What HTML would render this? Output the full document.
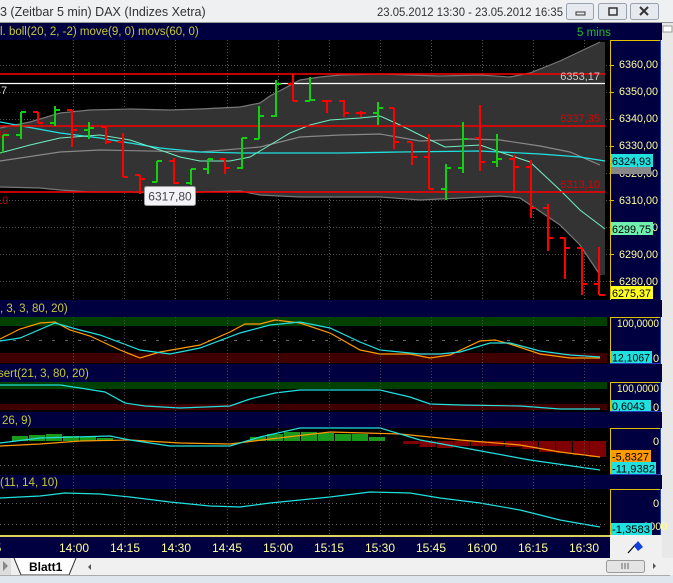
<!DOCTYPE html><html><head><meta charset="utf-8"><style>
body{margin:0;width:673px;height:583px;overflow:hidden;background:#f0f0f0;font-family:"Liberation Sans",sans-serif}
svg{position:absolute;left:0;top:0}
</style></head><body>
<svg width="673" height="583" viewBox="0 0 673 583" font-family="Liberation Sans, sans-serif">
<rect x="0" y="0" width="673" height="23" fill="#eef0f2"/>
<text x="0" y="16" font-size="12.5" fill="#333">3 (Zeitbar 5 min)  DAX (Indizes Xetra)</text>
<text x="377" y="16" font-size="12" fill="#333" textLength="186" lengthAdjust="spacingAndGlyphs">23.05.2012 13:30 - 23.05.2012 16:35</text>
<g fill="#e6e9ee" stroke="#9aa2ad"><rect x="566.5" y="3.5" width="27" height="16" rx="2"/><rect x="598.5" y="3.5" width="28" height="16" rx="2"/><rect x="630.5" y="3.5" width="28" height="16" rx="2"/></g>
<rect x="576" y="12" width="9" height="3" fill="none" stroke="#333"/>
<rect x="609" y="8" width="8" height="7" fill="none" stroke="#333" stroke-width="1.5"/>
<path d="M640 7l8 8M648 7l-8 8" stroke="#333" stroke-width="2"/>
<rect x="0" y="22" width="673" height="1" fill="#999"/>
<rect x="662" y="23" width="11" height="535" fill="#e8e8e8"/>
<rect x="663" y="26" width="9" height="6" fill="#fff" stroke="#999"/>
<rect x="0" y="23" width="662" height="17" fill="#000040"/>
<text x="0" y="35" font-size="11.5" fill="#c8c832">l. boll(20, 2, -2) move(9, 0) movs(60, 0)</text>
<text x="577" y="36" font-size="11.5" fill="#20c020">5 mins</text>
<rect x="0" y="40" width="610" height="260" fill="#000"/>
<g stroke="#555" stroke-dasharray="1 2"><path d="M73.5 40V300M124.5 40V300M175.5 40V300M227.5 40V300M278.5 40V300M329.5 40V300M380.5 40V300M431.5 40V300M482.5 40V300M533.5 40V300M584.5 40V300"/>
<path d="M0 65.5H610M0 92.5H610M0 119.5H610M0 146.5H610M0 173.5H610M0 200.5H610M0 227.5H610M0 254.5H610M0 281.5H610"/></g>
<polygon fill="#333" points="0,128 30,122 60,113 90,110 130,109 170,110 200,109 240,107 260,103 270,96 285,88 300,80 320,77 340,75 380,74 440,76 480,75 510,77 530,73 560,61 600,42 605,42 605,275 600,275 580,245 560,225 535,208 520,198 500,196 460,198 420,200 380,197 330,197 300,197 280,196 260,195 240,191 200,192 160,193 130,192 90,192 60,190 40,188 0,187"/>
<g fill="none" stroke="#777" stroke-width="1.2">
<polyline points="0,128 30,122 60,113 90,110 130,109 170,110 200,109 240,107 260,103 270,96 285,88 300,80 320,77 340,75 380,74 440,76 480,75 510,77 530,73 560,61 600,42"/>
<polyline points="0,187 40,188 60,190 90,192 130,192 160,193 200,192 240,191 260,195 280,196 300,197 330,197 380,197 420,200 460,198 500,196 520,198 535,208 560,225 580,245 600,275"/>
<polyline points="0,161 60,152 100,150 200,152 260,147 300,137 340,135 380,134 420,141 470,139 500,140 540,146 570,152 600,165" stroke="#888"/>
</g>
<polyline fill="none" stroke="#20e0e0" stroke-width="1.3" points="0,122 60,133 100,138 160,148 200,152 240,153 300,153 340,153 400,152 480,151 540,154 580,157 605,161"/>
<polyline fill="none" stroke="#70f0c0" stroke-width="1" points="0,153 30,145 60,138 100,135 130,140 160,150 180,157 200,161 230,161 250,157 270,145 290,133 310,125 330,120 360,118 380,116 400,125 420,135 445,147 480,145 500,152 530,162 560,190 580,210 605,229"/>
<g stroke="#f00" stroke-width="1.5"><path d="M0 74H605M0 126H605M0 192H605"/></g>
<path d="M0 83.5H605" stroke="#fff" stroke-width="1.3"/>
<text x="600" y="80" font-size="11" fill="#ccc" text-anchor="end">6353,17</text>
<text x="600" y="122" font-size="11" fill="#e00000" text-anchor="end">6337,35</text>
<text x="600" y="188" font-size="11" fill="#e00000" text-anchor="end">6313,10</text>
<text x="1" y="94" font-size="11" fill="#ddd">7</text>
<text x="-4" y="138" font-size="11" fill="#c00">35</text>
<text x="-4" y="204" font-size="11" fill="#c00">10</text>
<g stroke-width="2" fill="none">
<path stroke="#10d010" d="M3 135V153M3 135H9 M21 112V139M16 135H21M21 112H26 M55 106V126M50 123H55M55 110H60 M89 122V139M84 130H89M89 128H94 M157 161V182M152 182H157M157 161H162 M191 169V185M186 183H191M191 169H196 M208 159V174M203 169H208M208 159H213 M242 138V169M237 168H242M242 138H247 M259 106V139M254 139H259M259 116H264 M276 80V117M271 116H276M276 84H281 M310 77V101M305 101H310M310 100H315 M378 102V125M373 113H378M378 108H383 M446 164V200M441 189H446M446 168H451 M463 122V173M458 168H463M463 139H468 M497 134V167M492 162H497M497 159H502"/>
<path stroke="#f00" d="M38 112V123M33 112H38M38 123H43 M72 110V147M67 110H72M72 130H77 M106 127V144M101 127H106M106 142H111 M123 133V177M118 142H123M123 177H128 M140 175V194M135 175H140M140 179H145 M174 158V184M169 161H174M174 183H179 M225 159V174M220 159H225M225 168H230 M293 74V101M288 84H293M293 101H298 M327 100V113M322 101H327M327 101H332 M344 100V117M339 101H344M344 113H349 M361 111V117M356 113H361M361 113H366 M394 108V149M389 108H394M394 142H399 M412 142V165M407 142H412M412 157H417 M429 134V189M424 157H429M429 189H434 M480 105V171M475 138H480M480 162H485 M514 155V193M509 159H514M514 167H519 M531 160V218M526 167H531M531 208H536 M548 204V251M543 208H548M548 238H553 M565 238V279M560 238H565M565 248H570 M582 248V295M577 248H582M582 284H587 M599 247V295M594 284H599M599 295H605"/>
</g>
<rect x="144.5" y="186.5" width="51" height="19" rx="2" fill="#f4f4f8" stroke="#999"/>
<text x="170" y="200.5" font-size="12" fill="#444" text-anchor="middle">6317,80</text>
<rect x="610" y="40" width="51" height="260" fill="#000040"/>
<path d="M610.5 300V40.5H661" stroke="#e0c000" fill="none"/>
<path d="M660.5 40V300" stroke="#2040c0"/>
<g font-size="11" fill="#ffff99">
<text x="619" y="68" textLength="39" lengthAdjust="spacingAndGlyphs">6360,00</text><text x="619" y="95" textLength="39" lengthAdjust="spacingAndGlyphs">6350,00</text><text x="619" y="122" textLength="39" lengthAdjust="spacingAndGlyphs">6340,00</text><text x="619" y="149" textLength="39" lengthAdjust="spacingAndGlyphs">6330,00</text><text x="619" y="177" textLength="39" lengthAdjust="spacingAndGlyphs">6320,00</text><text x="619" y="204" textLength="39" lengthAdjust="spacingAndGlyphs">6310,00</text><text x="619" y="231" textLength="39" lengthAdjust="spacingAndGlyphs">6300,00</text><text x="619" y="258" textLength="39" lengthAdjust="spacingAndGlyphs">6290,00</text><text x="619" y="285" textLength="39" lengthAdjust="spacingAndGlyphs">6280,00</text></g>
<g stroke="#e0c000"><path d="M611 65.5h3M611 92.5h3M611 119.5h3M611 146.5h3M611 173.5h3M611 200.5h3M611 227.5h3M611 254.5h3M611 281.5h3"/></g>
<rect x="611" y="166" width="40" height="8" fill="#888"/>
<rect x="611" y="154" width="42" height="13" fill="#20e0e0"/><text x="612" y="165" font-size="11" fill="#000" textLength="39" lengthAdjust="spacingAndGlyphs">6324,93</text>
<rect x="611" y="222" width="42" height="13" fill="#70f0b0"/><text x="612" y="233" font-size="11" fill="#000" textLength="39" lengthAdjust="spacingAndGlyphs">6299,75</text>
<rect x="611" y="286" width="42" height="13" fill="#ffff20"/><text x="612" y="297" font-size="11" fill="#000" textLength="39" lengthAdjust="spacingAndGlyphs">6275,37</text>
<rect x="0" y="300" width="662" height="17" fill="#000040"/><text x="0" y="312" font-size="11.5" fill="#c8c832">, 3, 3, 80, 20)</text>
<rect x="0" y="364" width="662" height="18" fill="#000040"/><text x="-2" y="377" font-size="11.5" fill="#c8c832">sert(21, 3, 80, 20)</text>
<rect x="0" y="412" width="662" height="16" fill="#000040"/><text x="2" y="424" font-size="11.5" fill="#c8c832">26, 9)</text>
<rect x="0" y="475" width="662" height="14" fill="#000040"/><text x="0" y="486" font-size="11.5" fill="#c8c832">(11, 14, 10)</text>
<rect x="0" y="317" width="610" height="47" fill="#000"/>
<rect x="0" y="317" width="607" height="9" fill="#004000"/>
<rect x="0" y="353" width="607" height="10" fill="#400000"/>
<path d="M0 340.5H607" stroke="#666" stroke-dasharray="3 10"/>
<polyline fill="none" stroke="#ff9900" stroke-width="1.2" points="0,339 20,329 40,323 55,322 70,330 90,336 120,350 140,358 160,352 200,345 230,332 245,324 260,324 275,320 300,323 330,333 360,350 380,354 410,354 430,358 450,355 480,341 495,340 510,344 540,354 570,358 600,358"/>
<polyline fill="none" stroke="#20e0e0" stroke-width="1.2" points="0,341 20,338 55,323 80,330 100,335 140,350 170,354 200,348 240,333 270,325 300,322 330,328 360,342 380,350 420,354 440,354 460,352 490,343 510,343 540,351 570,355 600,357"/>
<rect x="0" y="382" width="610" height="30" fill="#000"/>
<rect x="0" y="382" width="607" height="7" fill="#004000"/>
<rect x="0" y="404" width="607" height="6" fill="#400000"/>
<polyline fill="none" stroke="#20e0e0" stroke-width="1.2" points="0,385 60,385 80,388 105,392 125,403 145,406 180,408 230,406 250,399 275,393 300,390 380,390 410,397 430,404 460,405 520,406 560,409 600,409"/>
<rect x="0" y="428" width="610" height="47" fill="#000"/>
<path d="M0 465.5H607" stroke="#666" stroke-dasharray="1 3"/>
<g fill="#1a9a1a"><rect x="12" y="436" width="16" height="5"/><rect x="29" y="435" width="16" height="6"/><rect x="46" y="434" width="16" height="7"/><rect x="63" y="436" width="16" height="5"/><rect x="80" y="437" width="16" height="4"/><rect x="97" y="438" width="16" height="3"/><rect x="250" y="437" width="16" height="4"/><rect x="267" y="434" width="16" height="7"/><rect x="284" y="432" width="16" height="9"/><rect x="301" y="432" width="16" height="9"/><rect x="318" y="433" width="16" height="8"/><rect x="335" y="434" width="16" height="7"/><rect x="352" y="434" width="16" height="7"/><rect x="369" y="437" width="16" height="4"/></g>
<g fill="#800000"><rect x="403" y="441" width="16" height="3"/><rect x="420" y="441" width="16" height="6"/><rect x="437" y="441" width="16" height="7"/><rect x="454" y="441" width="16" height="5"/><rect x="471" y="441" width="16" height="5"/><rect x="488" y="441" width="16" height="5"/><rect x="505" y="441" width="16" height="6"/><rect x="522" y="441" width="16" height="8"/><rect x="539" y="441" width="16" height="11"/><rect x="556" y="441" width="16" height="12"/><rect x="573" y="441" width="16" height="14"/><rect x="590" y="441" width="16" height="16"/></g>
<polyline fill="none" stroke="#ff9900" stroke-width="1.2" points="0,446 40,444 80,441 130,440 180,443 230,444 270,439 330,432 400,434 460,440 520,445 560,452 600,457"/>
<polyline fill="none" stroke="#20e0e0" stroke-width="1.2" points="0,443 40,438 110,436 130,440 170,446 230,446 260,437 300,428 380,428 420,440 470,449 530,460 600,470"/>
<rect x="0" y="489" width="610" height="46" fill="#000"/>
<path d="M0 503.5H607M0 524.5H607" stroke="#666" stroke-dasharray="1 3"/>
<polyline fill="none" stroke="#20e0e0" stroke-width="1.2" points="0,498 40,496 65,493 100,494 130,497 170,502 210,506 240,507 270,503 300,500 330,497 370,492 410,493 440,498 480,503 520,510 560,520 600,527"/>
<g stroke="#555" stroke-dasharray="1 2"><path d="M73.5 317V535M124.5 317V535M175.5 317V535M227.5 317V535M278.5 317V535M329.5 317V535M380.5 317V535M431.5 317V535M482.5 317V535M533.5 317V535M584.5 317V535" opacity="0.8"/></g>
<g fill="#000040"><rect x="610" y="317" width="51" height="47"/><rect x="610" y="382" width="51" height="30"/><rect x="610" y="428" width="51" height="47"/><rect x="610" y="489" width="51" height="46"/></g>
<g stroke="#e0c000" fill="none"><path d="M610.5 364V317.5H661M610.5 412V382.5H661M610.5 475V428.5H661M610.5 535V489.5H661"/></g>
<g stroke="#2040c0"><path d="M660.5 317V364M660.5 382V412M660.5 428V475M660.5 489V535M610 363.5H661M610 411.5H661M610 474.5H661"/></g>
<g font-size="11" fill="#ffff99">
<text x="617" y="327" textLength="42" lengthAdjust="spacingAndGlyphs">100,0000</text><text x="653" y="362">0</text>
<text x="617" y="392" textLength="42" lengthAdjust="spacingAndGlyphs">100,0000</text><text x="653" y="411">0</text>
<text x="653" y="445">0</text><text x="653" y="507">0</text><text x="640" y="530">,0000</text></g>
<rect x="611" y="351" width="41" height="12" fill="#20e0e0"/><text x="612" y="361.5" font-size="11" textLength="38" lengthAdjust="spacingAndGlyphs">12,1067</text>
<rect x="611" y="400" width="40" height="11" fill="#20e0e0"/><text x="612" y="410" font-size="11" textLength="33" lengthAdjust="spacingAndGlyphs">0,6043</text>
<rect x="611" y="450" width="40" height="12" fill="#ff9900"/><text x="612" y="460.5" font-size="11" textLength="37" lengthAdjust="spacingAndGlyphs">-5,8327</text>
<rect x="611" y="462" width="45" height="12" fill="#20e0e0"/><text x="612" y="472.5" font-size="11" textLength="43" lengthAdjust="spacingAndGlyphs">-11,9382</text>
<rect x="611" y="523" width="41" height="12" fill="#20e0e0"/><text x="612" y="533" font-size="11" textLength="38" lengthAdjust="spacingAndGlyphs">-1,3583</text>
<rect x="0" y="535" width="610" height="2" fill="#e0d060"/>
<rect x="0" y="537" width="610" height="21" fill="#000040"/>
<rect x="610" y="535" width="52" height="23" fill="#f0f0f0"/>
<g font-size="12" fill="#ffff99" text-anchor="middle">
<text x="-2" y="552">5</text><text x="74" y="552">14:00</text><text x="125" y="552">14:15</text><text x="176" y="552">14:30</text><text x="227" y="552">14:45</text><text x="278" y="552">15:00</text><text x="329" y="552">15:15</text><text x="380" y="552">15:30</text><text x="431" y="552">15:45</text><text x="482" y="552">16:00</text><text x="533" y="552">16:15</text><text x="584" y="552">16:30</text></g>
<path d="M628 553l8-9" stroke="#000" stroke-width="1.2"/><path d="M634 546l4-5 5 6-5 4z" fill="#1040e0"/>
<rect x="0" y="558" width="673" height="17" fill="#f0f0f0"/>
<rect x="0" y="558" width="11" height="17" fill="#ddd"/><path d="M3 561v10l5-5z" fill="#888"/>
<path d="M14 558l7 17h48l7-17" fill="#fff" stroke="#333"/>
<text x="29" y="571" font-size="12" font-weight="bold" fill="#000">Blatt1</text>
<path d="M91 564v6l-3-3z" fill="#555"/>
<rect x="606.5" y="560.5" width="38" height="12" rx="2" fill="#e4e4e4" stroke="#999"/>
<path d="M622 563v6M625 563v6M628 563v6" stroke="#666"/>
<path d="M653 563v6l3-3z" fill="#555"/>
<rect x="0" y="575" width="673" height="8" fill="#dfe6ee"/>
<rect x="0" y="575" width="670" height="1" fill="#aaa"/>
</svg>
</body></html>
